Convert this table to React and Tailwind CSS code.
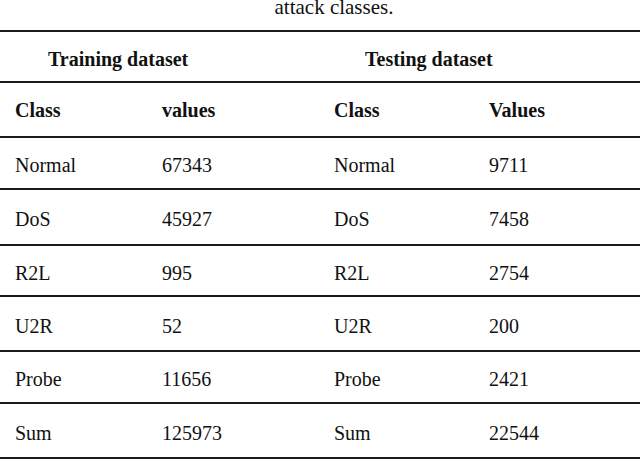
import React from "react";

const rows = [
  ["Normal", "67343", "Normal", "9711", "h-[52px]"],
  ["DoS", "45927", "DoS", "7458", "h-[56px]"],
  ["R2L", "995", "R2L", "2754", "h-[51px]"],
  ["U2R", "52", "U2R", "200", "h-[55px]"],
  ["Probe", "11656", "Probe", "2421", "h-[52px]"],
  ["Sum", "125973", "Sum", "22544", "h-[55px]"],
];

export default function App() {
  return (
    <div
      className="w-[640px] h-[459px] bg-white text-[#111] overflow-hidden"
      style={{ fontFamily: '"Liberation Serif", "Times New Roman", serif' }}
    >
      <div className="h-[30px] pl-[28px] text-center text-[21px] leading-[21px] overflow-hidden">
        <div className="-mt-[3px]">attack classes.</div>
      </div>
      <div className="border-t-2 border-[#1a1a1a]">
        <div className="h-[49px] grid grid-cols-[317px_1fr] items-center pl-[15px] pt-[4px] text-[20px] font-bold">
          <div className="pl-[33px]">Training dataset</div>
          <div className="pl-[33px]">Testing dataset</div>
        </div>
        <div className="h-[55px] border-t-2 border-[#1a1a1a] grid grid-cols-[147px_172px_155px_1fr] items-center pl-[15px] pt-[1px] text-[20px] font-bold">
          <div>Class</div>
          <div>values</div>
          <div>Class</div>
          <div>Values</div>
        </div>
        {rows.map((r) => (
          <div
            key={r[0]}
            className={`${r[4]} border-t-2 border-[#1a1a1a] grid grid-cols-[147px_172px_155px_1fr] items-center pl-[15px] pt-[4px] text-[20px]`}
          >
            <div>{r[0]}</div>
            <div>{r[1]}</div>
            <div>{r[2]}</div>
            <div>{r[3]}</div>
          </div>
        ))}
        <div className="border-t-2 border-[#1a1a1a]" />
      </div>
    </div>
  );
}
